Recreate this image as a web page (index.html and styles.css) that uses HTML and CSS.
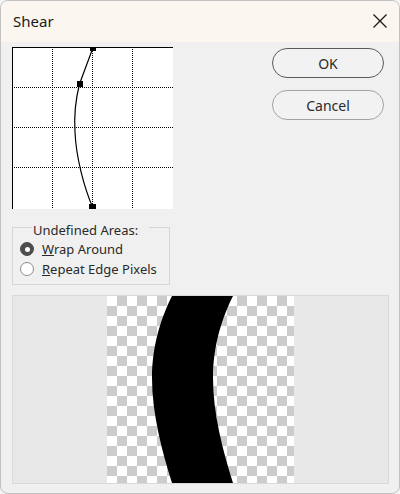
FILE: index.html
```html
<!DOCTYPE html>
<html>
<head>
<meta charset="utf-8">
<link rel="stylesheet" href="styles.css">
</head>
<body>
<div class="window">
  <div class="titlebar">
    <span class="title">Shear</span>
    <svg class="close" width="16" height="16" viewBox="0 0 16 16"><path d="M1.5 1.5 L14.5 14.5 M14.5 1.5 L1.5 14.5" stroke="#1a1a1a" stroke-width="1.3" fill="none"/></svg>
  </div>
  <div class="content">
    <div class="top">
      <div class="graph">
        <svg width="161" height="162" viewBox="0 0 161 162" shape-rendering="crispEdges">
          <rect x="0" y="0" width="161" height="162" fill="#fff"/>
          <g stroke="#000" stroke-width="1" stroke-dasharray="1 1">
            <line x1="40.5" y1="0" x2="40.5" y2="162"/>
            <line x1="80.5" y1="0" x2="80.5" y2="162"/>
            <line x1="120.5" y1="0" x2="120.5" y2="162"/>
            <line x1="0" y1="40.5" x2="161" y2="40.5"/>
            <line x1="0" y1="80.5" x2="161" y2="80.5"/>
            <line x1="0" y1="120.5" x2="161" y2="120.5"/>
          </g>
          <line x1="0" y1="0.5" x2="161" y2="0.5" stroke="#000"/>
          <line x1="0.5" y1="0" x2="0.5" y2="162" stroke="#000"/>
          <path d="M80.5,2 L67.5,37 C63,55 62,70 63,85 C64,110 72,140 80.5,160" stroke="#000" stroke-width="1.2" fill="none" shape-rendering="auto"/>
          <rect x="78" y="0" width="6" height="4" fill="#000"/>
          <rect x="65" y="34" width="6" height="6" fill="#000"/>
          <rect x="77" y="157" width="7" height="5" fill="#000"/>
        </svg>
      </div>
      <div class="buttons">
        <button class="btn default">OK</button>
        <button class="btn">Cancel</button>
      </div>
    </div>
    <fieldset class="group">
      <legend>Undefined Areas:</legend>
      <div class="radio-row"><span class="radio checked"></span><span><u>W</u>rap Around</span></div>
      <div class="radio-row"><span class="radio"></span><span><u>R</u>epeat Edge Pixels</span></div>
    </fieldset>
    <div class="preview">
      <div class="checker">
        <svg width="187" height="187" viewBox="0 0 187 187">
          <path d="M65,0 C55,20 45,48 45,82 C45,118 55,155 65,187 L126,187 C116,155 106,118 106,82 C106,48 116,20 126,0 Z" fill="#000"/>
        </svg>
      </div>
    </div>
  </div>
</div>
</body>
</html>
```

FILE: styles.css
```css
html, body {
  margin: 0;
  padding: 0;
  background: #f3f3f3;
}
body {
  font-family: "Noto Sans", "Open Sans", sans-serif;
  color: #222;
}
.window {
  width: 400px;
  height: 494px;
  box-sizing: border-box;
  border: 1px solid #c2c2c2;
  border-radius: 8px;
  overflow: hidden;
  background: #f0f0f0;
  display: flex;
  flex-direction: column;
}
.titlebar {
  height: 41px;
  flex: none;
  background: #fbf7f0;
  display: flex;
  align-items: center;
  padding: 0 11px 0 12px;
}
.title {
  font-size: 15px;
  color: #1a1a1a;
  flex: 1;
  margin-top: -2px;
}
.close {
  margin-top: -2px;
}
.content {
  flex: 1;
  display: flex;
  flex-direction: column;
  padding: 5px 10px 0 11px;
}
.top {
  display: flex;
  align-items: flex-start;
}
.graph {
  width: 161px;
  height: 162px;
  line-height: 0;
}
.buttons {
  margin-left: auto;
  margin-right: 5px;
  margin-top: 1px;
  display: flex;
  flex-direction: column;
  gap: 12px;
}
.btn {
  width: 112px;
  height: 30px;
  border-radius: 15px;
  border: 1px solid #a3a3a3;
  background: #f2f2f2;
  font-family: "Noto Sans", "Open Sans", sans-serif;
  font-size: 14px;
  color: #2a2a2a;
  padding: 0;
}
.btn.default {
  border-color: #5a5a5a;
}
.group {
  width: 158px;
  box-sizing: border-box;
  margin: 8px 0 0 0;
  padding: 1px 0 5px 7px;
  border: 1px solid #d6d6d6;
  border-radius: 0;
  font-size: 13px;
  color: #2a2a2a;
}
.group legend {
  margin-left: 12px;
  padding: 5px 11px 0 1px;
  line-height: 16px;
}
.radio-row {
  height: 20px;
  display: flex;
  align-items: center;
  gap: 8px;
  line-height: 16px;
}
.radio {
  width: 14px;
  height: 14px;
  box-sizing: border-box;
  border-radius: 50%;
  border: 1px solid #8a8a8a;
  background: #fff;
  display: flex;
  align-items: center;
  justify-content: center;
  flex: none;
}
.radio.checked {
  background: #4d4d4d;
  border-color: #4d4d4d;
}
.radio.checked::after {
  content: "";
  width: 5px;
  height: 5px;
  border-radius: 50%;
  background: #fff;
}
.preview {
  margin-top: 10px;
  height: 189px;
  box-sizing: border-box;
  border: 1px solid #d9d9d9;
  background: #e8e8e8;
  display: flex;
  justify-content: center;
}
.checker {
  width: 187px;
  height: 187px;
  line-height: 0;
  background-image: conic-gradient(#cccccc 0 25%, #ffffff 0 50%, #cccccc 0 75%, #ffffff 0);
  background-size: 20px 20px;
}
```
